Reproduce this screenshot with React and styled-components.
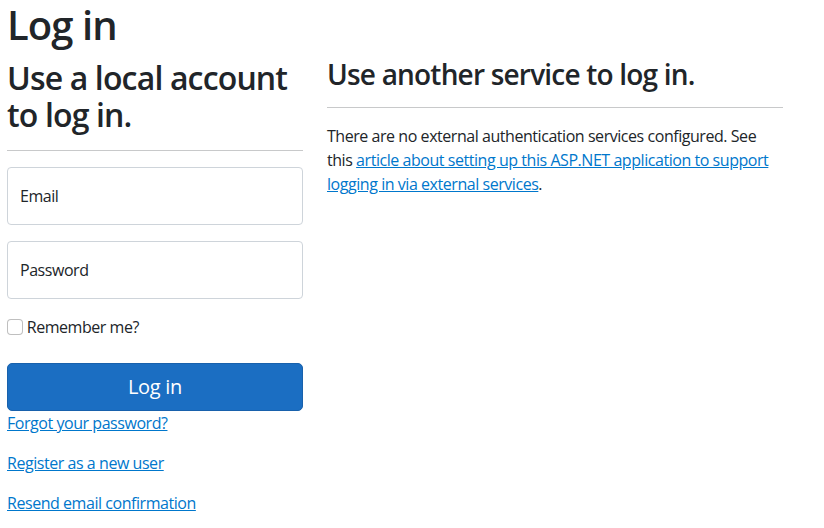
import React from "react";
import styled, { createGlobalStyle } from "styled-components";

const GlobalStyle = createGlobalStyle`
  *, *::before, *::after {
    box-sizing: border-box;
  }
  body {
    margin: 0;
    background: #fff;
    color: #212529;
    font-family: "Open Sans", "Noto Sans", sans-serif;
    font-size: 16px;
    line-height: 1.5;
    letter-spacing: -0.45px;
  }
`;

const Page = styled.main`
  padding: 1px 7px 0;
`;

const Title = styled.h1`
  margin: 0 0 8px;
  font-size: 40px;
  font-weight: 600;
  line-height: 1.2;
  letter-spacing: -0.9px;
`;

const Row = styled.div`
  display: flex;
  gap: 24px;
  align-items: flex-start;
`;

const Column = styled.section`
  flex: 0 0 ${props => props.width}px;
  width: ${props => props.width}px;
`;

const Heading = styled.h2`
  margin: 0 0 8px;
  padding-top: 2px;
  font-size: ${props => props.size}px;
  font-weight: 600;
  line-height: ${props => props.lh}px;
  letter-spacing: ${props => props.track}px;
`;

const Rule = styled.hr`
  margin: 16px 0;
  border: 0;
  border-top: 1px solid #c8c9ca;
`;

const Floating = styled.div`
  position: relative;
  margin-bottom: 16px;
`;

const Input = styled.input`
  display: block;
  width: 100%;
  height: 58px;
  padding: 16px 12px;
  border: 1px solid #ced4da;
  border-radius: 4px;
  font: inherit;
  color: #212529;
  background: #fff;
  &::placeholder {
    color: transparent;
  }
`;

const FloatLabel = styled.label`
  position: absolute;
  top: 0;
  left: 0;
  height: 100%;
  padding: 16px 12px;
  border: 1px solid transparent;
  pointer-events: none;
  color: #212529;
`;

const CheckRow = styled.div`
  margin-bottom: 16px;
`;

const CheckLabel = styled.label`
  display: inline-block;
  margin-bottom: 8px;
`;

const Check = styled.input.attrs({ type: "checkbox" })`
  appearance: none;
  width: 16px;
  height: 16px;
  margin: 4px 0 0;
  vertical-align: top;
  border: 1px solid rgba(0, 0, 0, 0.25);
  border-radius: 4px;
  background: #fff;
`;

const Button = styled.button`
  display: block;
  width: 100%;
  padding: 8px 16px;
  border: 1px solid #1861ac;
  border-radius: 5px;
  background: #1b6ec2;
  color: #fff;
  font: inherit;
  font-size: 20px;
  line-height: 1.5;
  letter-spacing: -0.3px;
`;

const Para = styled.p`
  margin: 0 0 16px;
`;

const Link = styled.a`
  color: #0077cc;
  text-decoration: underline;
`;

export default function App() {
  return (
    <>
      <GlobalStyle />
      <Page>
        <Title>Log in</Title>
        <Row>
          <Column width={296}>
            <form onSubmit={e => e.preventDefault()}>
              <Heading size={32} lh={37.4} track={-0.85}>
                Use a local account to log in.
              </Heading>
              <Rule />
              <Floating>
                <Input id="email" type="email" placeholder="name@example.com" />
                <FloatLabel htmlFor="email">Email</FloatLabel>
              </Floating>
              <Floating>
                <Input id="password" type="password" placeholder="password" />
                <FloatLabel htmlFor="password">Password</FloatLabel>
              </Floating>
              <CheckRow>
                <CheckLabel>
                  <Check /> Remember me?
                </CheckLabel>
              </CheckRow>
              <Button type="submit">Log in</Button>
              <div>
                <Para>
                  <Link href="#">Forgot your password?</Link>
                </Para>
                <Para>
                  <Link href="#">Register as a new user</Link>
                </Para>
                <Para>
                  <Link href="#">Resend email confirmation</Link>
                </Para>
              </div>
            </form>
          </Column>
          <Column width={456}>
            <Heading as="h3" size={28} lh={31.6} track={-0.8}>
              Use another service to log in.
            </Heading>
            <Rule />
            <Para>
              There are no external authentication services configured. See this{" "}
              <Link href="#">article about setting up this ASP.NET application to support logging in via external services</Link>.
            </Para>
          </Column>
        </Row>
      </Page>
    </>
  );
}
